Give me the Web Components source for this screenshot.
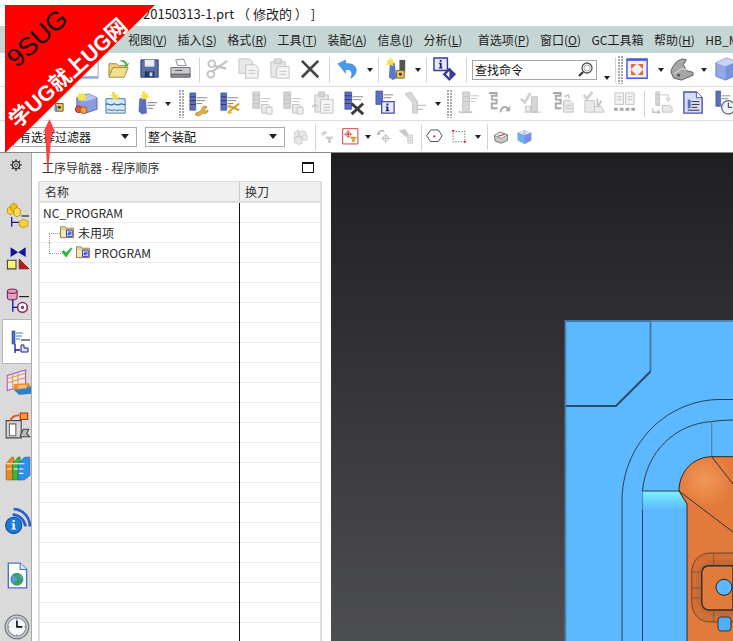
<!DOCTYPE html>
<html><head><meta charset="utf-8"><style>
html,body{margin:0;padding:0;width:733px;height:641px;overflow:hidden;background:#fff;font-family:"Noto Sans CJK SC","Noto Sans",sans-serif}
</style></head><body>
<nx-app>
<nx-titlebar>20150313-1.prt （ 修改的 ） ]</nx-titlebar>
<nx-menubar>
<nx-menu k="V">视图</nx-menu><nx-menu k="S">插入</nx-menu><nx-menu k="R">格式</nx-menu><nx-menu k="T">工具</nx-menu><nx-menu k="A">装配</nx-menu><nx-menu k="I">信息</nx-menu><nx-menu k="L">分析</nx-menu><nx-menu k="P" style="margin-left:5px">首选项</nx-menu><nx-menu k="O">窗口</nx-menu><nx-menu>GC工具箱</nx-menu><nx-menu k="H">帮助</nx-menu><nx-menu>HB_M</nx-menu>
</nx-menubar>
<nx-toolbar pad="72.5">
<nx-tool i="page"></nx-tool><nx-tool i="open"></nx-tool><nx-tool i="save"></nx-tool><nx-tool i="print"></nx-tool><nx-sep w="6"></nx-sep>
<nx-tool i="scissors"></nx-tool><nx-tool i="copy"></nx-tool><nx-tool i="paste"></nx-tool><nx-tool i="del"></nx-tool><nx-sep w="6"></nx-sep>
<nx-tool i="undo"></nx-tool><nx-dd w="12"></nx-dd><nx-sep w="6"></nx-sep><nx-tool i="millkey"></nx-tool><nx-dd w="11"></nx-dd><nx-sep w="6"></nx-sep><nx-tool i="infod"></nx-tool><nx-sep w="11.5"></nx-sep>
<nx-search>查找命令</nx-search><nx-space w="3"></nx-space><nx-dd w="14" low></nx-dd><nx-sep w="3"></nx-sep><nx-space w="1"></nx-space><nx-dots></nx-dots><nx-space w="1"></nx-space><nx-tool i="fit" w="28"></nx-tool><nx-dd w="18"></nx-dd><nx-tool i="seat" w="23"></nx-tool><nx-dd w="22"></nx-dd><nx-tool i="cube" w="22"></nx-tool>
</nx-toolbar>
<nx-toolbar pad="39">
<nx-tool i="mk"></nx-tool><nx-tool i="cherry"></nx-tool><nx-tool i="water"></nx-tool><nx-tool i="spark"></nx-tool><nx-dd w="10"></nx-dd><nx-space w="5.5"></nx-space><nx-dots></nx-dots>
<nx-tool i="wrench"></nx-tool><nx-tool i="cut"></nx-tool><nx-tool i="gcopy"></nx-tool><nx-tool i="gcopy"></nx-tool><nx-tool i="gpaste"></nx-tool><nx-tool i="xop"></nx-tool><nx-tool i="iop"></nx-tool><nx-tool i="gtool"></nx-tool><nx-dd w="12"></nx-dd><nx-space w="3.5"></nx-space><nx-dots></nx-dots>
<nx-tool i="gdrill"></nx-tool><nx-tool i="post" w="32"></nx-tool><nx-tool i="gcheck" w="32"></nx-tool><nx-tool i="gpost" w="32"></nx-tool><nx-tool i="gmach"></nx-tool><nx-tool i="book"></nx-tool><nx-sep w="6"></nx-sep>
<nx-tool i="gflow"></nx-tool><nx-tool i="list"></nx-tool><nx-tool i="clocktool"></nx-tool>
</nx-toolbar>
<nx-toolbar pad="13" last>
<nx-combo w="124" inset="5">有选择过滤器</nx-combo><nx-space w="8"></nx-space><nx-combo w="140">整个装配</nx-combo>
<nx-tool i="gasm" w="30"></nx-tool><nx-sep w="1"></nx-sep><nx-tool i="gfil" w="26"></nx-tool><nx-tool i="snap" w="17"></nx-tool><nx-dd w="17"></nx-dd><nx-tool i="grot" w="17"></nx-tool><nx-tool i="gmov" w="27"></nx-tool><nx-sep w="2"></nx-sep>
<nx-tool i="hex" w="26"></nx-tool><nx-tool i="dash" w="23"></nx-tool><nx-dd w="14"></nx-dd><nx-sep w="4"></nx-sep><nx-tool i="shade" w="25"></nx-tool><nx-tool i="box3" w="21"></nx-tool>
</nx-toolbar>
<nx-work>
<nx-rail>
<nx-railtab i="gear" h="24"></nx-railtab><nx-railtab i="asm" h="42" mt="18"></nx-railtab><nx-railtab i="con" h="40"></nx-railtab><nx-railtab i="mach" h="34" mt="8"></nx-railtab><nx-railtab i="opn" h="45" active></nx-railtab><nx-railtab i="grid" h="38" pad></nx-railtab><nx-railtab i="robot" h="48" pad></nx-railtab><nx-railtab i="books" h="36" pad></nx-railtab><nx-railtab i="rss" h="70" pad></nx-railtab><nx-railtab i="web" h="40" pad></nx-railtab><nx-railtab i="clock" h="64" pad></nx-railtab>
</nx-rail>
<nx-navigator heading="工序导航器 - 程序顺序">
<nx-tree-row>NC_PROGRAM</nx-tree-row>
<nx-tree-row depth="1" folder link="mid">未用项</nx-tree-row>
<nx-tree-row depth="2" folder check link="end">PROGRAM</nx-tree-row>
</nx-navigator>
<nx-viewport></nx-viewport>
</nx-work>
<nx-ribbon></nx-ribbon>
</nx-app>
<script>
const G='#c4c4c4',GD='#a8a8a8',GL='#e8e8e8';
const gs=`fill="${GL}" stroke="${G}"`;
const ICONS={
page:`<path d="M1 3h22v19H1z" fill="#fff" stroke="#8fa4d8"/><path d="M1 21h22" stroke="#8fa4d8" stroke-width="2"/>`,
open:`<path d="M2 20V7h8l2 2h7v3" fill="#e8d27a" stroke="#a08a3a"/><path d="M2 21l4-10h16l-4 10z" fill="#f2e08e" stroke="#a08a3a"/><path d="M13 4c4-2 7 0 8 3l2-1-2 5-4-3 2 0c-1-2-3-3-6-4z" fill="#5fae5a"/>`,
save:`<path d="M3 3h18v18H3z" fill="#5a6fa8" stroke="#2f3f70"/><path d="M7 3h10v7H7z" fill="#e8ecf5"/><path d="M7 15h10v6H7z" fill="#2a3560"/><path d="M12 16h3v4h-3z" fill="#cfd6e8"/>`,
print:`<path d="M7 3l8-1 3 7H9z" fill="#fff" stroke="#8a8a8a"/><path d="M2 11h20v7H2z" fill="#c8cbd0" stroke="#6c6c6c"/><path d="M2 18h20v3H2z" fill="#8f9297" stroke="#5c5c5c"/><path d="M6 14h8" stroke="#555"/>`,
scissors:`<path d="M22 4L7 15M21 12L8 9" stroke="${G}" stroke-width="2.4" fill="none"/><circle cx="6" cy="7" r="3.5" fill="none" stroke="${G}" stroke-width="2"/><circle cx="5" cy="18" r="3.5" fill="none" stroke="${G}" stroke-width="2"/>`,
copy:`<path d="M2 2h11l3 3v12H2z" ${gs}/><path d="M9 8h10l3 3v11H9z" fill="#f2f2f2" stroke="${G}"/><path d="M12 14h7M12 17h7" stroke="${G}"/>`,
paste:`<path d="M3 5h15v16H3z" ${gs}/><path d="M7 2h7v5H7z" fill="#dcdcdc" stroke="${G}"/><path d="M9 10h13v12H9z" fill="#f4f4f4" stroke="${G}"/><path d="M12 15h7M12 18h7" stroke="${G}"/>`,
del:`<path d="M3 4L20 21M20 4L3 21" stroke="#444" stroke-width="2.8"/>`,
undo:`<path d="M2 7l8-4v4c7-1 12 3 11 8-.5 3-3 6-6 7 2-3 2-6 0-8-1.500-1-3-1.300-5-1v4z" fill="#4a98e8" stroke="#3272c0" stroke-width=".5"/>`,
millkey:`<path d="M5 7l5-1 2 16-4 2-4-3z" fill="#5b78c8"/><path d="M15 3h6v13h-6z" fill="#555"/><path d="M12 14h8v8h-8z" fill="#e8c060" stroke="#8a6a20"/><circle cx="16" cy="18" r="1.500" fill="#333"/><path d="M6 0l1 3 3-1-2 3 3 1-3 1 1 3-3-2-2 3 0-3-3 0 2-2-2-3 3 1z" fill="#f5e04a"/>`,
infod:`<path d="M1 1h14v13H1z" fill="#e8eaf8" stroke="#3a3a9a" stroke-width="1.500"/><path d="M7 3h2v2H7zM6 6h3v5h1v1H6v-1h1V7H6z" fill="#1e1e80"/><path d="M17 11l7 7-7 7-7-7z" fill="#3a3aa0"/><path d="M17 14.500L13.500 18l3.500 3.500z" fill="#fff"/>`,
fit:`<path d="M1 2h21v20H1z" fill="#eef0fb" stroke="#4a5ad8" stroke-width="1.500"/><path d="M1 2h21v2H1z" fill="#4a5ad8"/><path d="M6 8l3 0-3 3zM17 8l-3 0 3 3zM6 18l3 0-3-3zM17 18l-3 0 3-3z" fill="#e86a3a" stroke="#e86a3a" stroke-width="1.500"/>`,
seat:`<path d="M2 16c0-3 2-6 4-9 2-3 5-4 8-5l4 1-3 5 3 6 7 2v3l-12 5-8-2z" fill="#a6a6a6" stroke="#5c5c5c"/><path d="M5 18l8-6 10 2" fill="none" stroke="#e6e6e6"/><circle cx="10" cy="19" r="1.500" fill="#555"/>`,
cube:`<path d="M2 6l11-5 10 4v14l-11 5-10-4z" fill="#93a9e6" stroke="#6a80c4"/><path d="M2 6l10 4 11-5-10-4z" fill="#c8d4f5"/><path d="M12 10v14l11-5V5z" fill="#7a92de"/>`,
mk:`<path d="M14 13h8v8h-8z" fill="#e8c060" stroke="#7a5a20"/><circle cx="18" cy="17" r="1.500" fill="#333"/><path d="M13 15h3v6h-3z" fill="#6a8ad0"/>`,
cherry:`<path d="M4 7l12-4 9 4v12l-12 4-9-4z" fill="#8a9ae0" stroke="#5a6ab0"/><path d="M4 7l9 4 12-4-9-4z" fill="#b8c4f0"/><circle cx="6" cy="19" r="3.500" fill="#e8503a" stroke="#a03020"/><circle cx="11" cy="20" r="3.500" fill="#f0a040" stroke="#a06020"/><path d="M9 0l1 3 3-1-1 3 3 1-3 1 1 3-3-1-1 3-1-3-3 1 1-3-3-1 3-1-1-3 3 1z" fill="#f5e64a"/>`,
water:`<path d="M2 8h20v15H2z" fill="#d8e8f8" stroke="#4a7aa8"/><path d="M2 14c3-2 4 2 7 0s4 2 7 0 4 1 6 0" fill="none" stroke="#2a6aa0" stroke-width="1.300"/><path d="M3 20c3-2 3 1 6 0s3 1 6 0 3 1 6 0" fill="none" stroke="#2a6aa0"/><path d="M11 1l1 3 3-1-1 3 3 1-3 1-1 2-1-2-3 1 0-3-3-1 3-1-1-3z" fill="#e8e048"/>`,
spark:`<path d="M5 8l6-1 1 16-5 1-3-3z" fill="#5b6ec0" stroke="#3c4a90" stroke-width=".5"/><path d="M13 12h10M13 15h8M13 18h6" stroke="#999" stroke-width="1.300"/><path d="M10 0l1 3 3-1-1 3 3 1-3 1-1 3-2-2-3 1 1-3-3-1 3-1-1-3z" fill="#f0e448"/>`,
wrench:`<path d="M3 2h6v18H3z" fill="#5b6ec0" stroke="#3c4a90" stroke-width=".7"/><path d="M3 6h6M3 10h6M3 14h6" stroke="#2d3870"/><path d="M10 7h11M10 10h9M10 13h6" stroke="#8a8a8a"/><path d="M9 23l5-2 3-5c2-1 3 0 4 1l-3 2 1 2 3-1c0 3-3 4-5 3l-5 3-3-1z" fill="#e8b040" stroke="#8a6a20" stroke-width=".6"/>`,
cut:`<path d="M3 2h6v18H3z" fill="#5b6ec0" stroke="#3c4a90" stroke-width=".7"/><path d="M3 6h6M3 10h6M3 14h6" stroke="#2d3870"/><path d="M10 7h11M10 10h9M10 13h6" stroke="#8a8a8a"/><path d="M22 13L12 21M22 20L13 16" stroke="#c89a2a" stroke-width="2"/><circle cx="12" cy="22" r="2" fill="#e8b040"/><circle cx="12" cy="16" r="2" fill="#e8b040"/>`,
gcopy:`<path d="M4 1h7v17H4z" fill="#d4d4d4" stroke="${G}"/><path d="M4 5h7M4 9h7M4 13h7" stroke="${G}"/><path d="M12 8h10M12 11h8" stroke="${G}"/><path d="M13 14h7l2 2v7h-9z" ${gs}/><path d="M18 17h6v7h-6z" fill="#f0f0f0" stroke="${G}"/>`,
gpaste:`<path d="M4 4h14v18H4z" ${gs}/><path d="M8 1h6v5H8z" fill="#d4d4d4" stroke="${G}"/><path d="M10 9h13v14H10z" fill="#f4f4f4" stroke="${G}"/><path d="M13 14h7M13 17h7M13 20h7" stroke="${G}"/><path d="M1 17l3-3 3 3" fill="none" stroke="${G}" stroke-width="1.500"/>`,
xop:`<path d="M3 1h7v18H3z" fill="#5b6ec0" stroke="#3c4a90" stroke-width=".7"/><path d="M3 5h7M3 9h7M3 13h7" stroke="#2d3870"/><path d="M11 6h11M11 9h9" stroke="#8a8a8a"/><path d="M10 13L22 24M22 13L10 24" stroke="#3c3c3c" stroke-width="3"/>`,
iop:`<path d="M3 0h7v14H3z" fill="#5b6ec0" stroke="#3c4a90" stroke-width=".7"/><path d="M11 4h10M11 7h8" stroke="#8a8a8a"/><path d="M9 11h13v12H9z" fill="#e8eaf8" stroke="#4a4aa0" stroke-width="1.300"/><path d="M14 13h2v2h-2zM13 16h3v4h1v1h-4v-1h1v-3h-1z" fill="#1e1e80"/>`,
gtool:`<path d="M1 3l6-2 7 10v12h-5V12z" fill="#d8d8d8" stroke="${G}"/><path d="M14 15h9M14 19h6" stroke="${G}" stroke-width="1.300"/>`,
gdrill:`<path d="M8 1h7v19H8z" fill="#d8d8d8" stroke="${G}"/><path d="M8 6h7M8 11h7" stroke="${G}"/><path d="M16 5h9M16 8h7M16 11h5" stroke="${G}"/><path d="M4 22h14" stroke="${G}" stroke-width="2"/>`,
post:`<path d="M2 2h8v3H5v4h5v4H5v5h6" fill="none" stroke="${GD}" stroke-width="2"/><path d="M14 22c0-4 3-6 6-5l2 2" fill="none" stroke="${GD}" stroke-width="2"/><path d="M24 15v6h-5z" fill="${GD}"/>`,
gcheck:`<path d="M2 8l4 4 6-10" fill="none" stroke="#d2d2d2" stroke-width="3"/><path d="M13 6h6v16h-6z" fill="#d6d6d6" stroke="${G}"/><path d="M5 22h18M7 16h5v5H7z" fill="#eee" stroke="${G}"/>`,
gpost:`<path d="M2 2h8v3H5v4h5v4H5v5h6" fill="none" stroke="${GD}" stroke-width="2"/><path d="M13 10h7l3 3v9H13z" ${gs}/><path d="M15 15h6M15 18h6" stroke="${G}"/><path d="M14 6l4-2 1 4" fill="none" stroke="${G}" stroke-width="1.500"/>`,
gmach:`<path d="M2 4l3 4 6-7" fill="none" stroke="#d2d2d2" stroke-width="3"/><path d="M3 10h10v12H3z" ${gs}/><path d="M13 16h7l3 6H13z" fill="#ececec" stroke="${G}"/><path d="M16 8v7M20 10l-3 6" stroke="${G}" stroke-width="2"/>`,
book:`<path d="M2 2h9v12H2zM13 2h9v12h-9z" fill="#f2f2f2" stroke="${G}"/><path d="M4 6h5M4 9h5M15 6h5M15 9h5" stroke="${G}"/><path d="M1 19h22" stroke="${GD}" stroke-width="3" stroke-dasharray="4 2"/>`,
gflow:`<path d="M6 1h4v14H6z" fill="#d8d8d8" stroke="${G}"/><path d="M6 4h4M6 8h4" stroke="${G}"/><path d="M11 4h8v4M19 11l-2-3h4z" fill="none" stroke="${G}"/><path d="M13 15h8l2 3v4H13z" ${gs}/><path d="M3 18v4h7M8 20l2 2-2 2" fill="none" stroke="${G}" stroke-width="1.500"/>`,
list:`<path d="M3 1h13l6 6v16H3z" fill="#d8dcf5" stroke="#4a50a8" stroke-width="1.400"/><path d="M16 1v6h6" fill="#fff" stroke="#4a50a8"/><path d="M7 9h3v9H7z" fill="#5b6ec0"/><path d="M11 11h8M11 14h8M11 17h6M7 20h12" stroke="#333"/>`,
clocktool:`<path d="M4 0h5v16H4z" fill="#5b6ec0" stroke="#3c4a90" stroke-width=".6"/><path d="M10 5h9M10 8h7" stroke="#8a8a8a"/><circle cx="17" cy="17" r="7" fill="#eef" stroke="#666" stroke-width="1.300"/><path d="M17 12v5h4" stroke="#333" fill="none"/>`,
gasm:`<path d="M5 6l6-3v9l-6 3zM5 15l6-3 5 3v7l-5 2-6-3z" ${gs}/><circle cx="17" cy="9" r="5" ${gs}/><circle cx="20" cy="14" r="4" ${gs}/>`,
gfil:`<path d="M2 8l5-3 3 2c-2 0-4 1-5 4zM8 13h11l-4 4v4h-3v-4z" fill="#d0d0d0" stroke="${G}"/>`,
snap:`<path d="M1 1h22v22H1z" fill="#fff" stroke="#c84040" stroke-width="1.400"/><circle cx="9" cy="9" r="3.500" fill="none" stroke="#b04040"/><path d="M9 3v12M3 9h12" stroke="#b04040"/><circle cx="9" cy="9" r="1.300" fill="#d82020"/><path d="M12 13h9l-3 4v3h-3v-3z" fill="#e8a820" stroke="#a07010" stroke-width=".5"/>`,
grot:`<path d="M3 9c0-4 5-7 9-4" fill="none" stroke="${GD}" stroke-width="1.600"/><circle cx="14" cy="15" r="4" fill="none" stroke="${GD}"/><path d="M14 8v14M7 15h14M2 9l2-3 2 3z" fill="${GD}" stroke="${GD}"/>`,
gmov:`<path d="M2 4l8-2 5 7-3 4z" fill="#c8c8c8" stroke="${G}"/><path d="M14 10h7v12h-7z" ${gs}/><path d="M14 14h7M14 18h7" stroke="${G}"/>`,
hex:`<path d="M6 3h12l6 9-6 9H6L0 12z" fill="#fff" stroke="#333" stroke-width="1.300" transform="translate(1 0) scale(.93)"/><circle cx="12" cy="12" r="1.600" fill="#e02020"/>`,
dash:`<path d="M3 5h17v15H3z" fill="#fff" stroke="#333" stroke-dasharray="2 2"/><circle cx="3" cy="4" r="1.600" fill="#e02020"/><circle cx="20" cy="20" r="1.600" fill="#e02020"/>`,
shade:`<path d="M2 11l8-5 11 4v8l-9 4-9-3z" fill="#c8c8c8" stroke="#555"/><path d="M2 11l10 4 9-5-11-4z" fill="#ededed" stroke="#555" stroke-width=".7"/><path d="M7 12l10-3" stroke="#e02020" stroke-width="1.400"/>`,
box3:`<path d="M2 7l10-4 10 4v11l-10 5-10-5z" fill="#6cb0f0"/><path d="M2 7l10 4 10-4-10-4z" fill="#cde4fb"/><path d="M12 11v12l10-5V7z" fill="#7a8ce8"/><path d="M12 3v8M2 7l10 4" stroke="#e06060" stroke-width=".7" fill="none"/>`,
gear:`<g fill="none" stroke="#3a3a3a"><circle cx="12" cy="12" r="4.800" stroke-width="1.800"/><circle cx="12" cy="12" r="2" stroke-width="1"/><path d="M12 4.500v2.500M12 17v2.500M4.500 12H7M17 12h2.500M6.700 6.700l1.800 1.800M15.500 15.500l1.800 1.800M17.300 6.700l-1.800 1.800M8.500 15.500l-1.800 1.800" stroke-width="2.200"/></g>`,
asm:`<path d="M5 6l3-2 3 2v4l-3 2-3-2z" fill="#f6d23c" stroke="#c08a10" stroke-width=".8"/><path d="M8 3l3-2 3 2v4l-3 2-3-2z" fill="#f2bf20" stroke="#c08a10" stroke-width=".8"/><path d="M11 7l3-2 3 2v5l-3 2-3-2z" fill="#f8dc60" stroke="#c08a10" stroke-width=".8"/><path d="M18 13h7" stroke="#111"/><path d="M9 14v9M9 19h7" stroke="#1a1a9a" stroke-width="1.200" fill="none"/><path d="M16 18l4-2 4 2v4l-4 2-4-2z" fill="#f6d23c" stroke="#c08a10" stroke-width=".8"/>`,
con:`<path d="M8 4l7 4.500L8 13zM22 4l-7 4.500 7 4.500z" fill="#14149a"/><path d="M5 16h8v8H5z" fill="#fbf36a" stroke="#444"/><path d="M16 15l9 9h-9z" fill="#c01818" stroke="#5a1010" stroke-width=".7"/>`,
mach:`<path d="M5 3a4.500 2 0 0 1 9 0v6a4.500 2 0 0 1-9 0z" fill="#e6a0c2" stroke="#7a2a5a"/><path d="M5 3a4.500 2 0 0 0 9 0" fill="none" stroke="#7a2a5a"/><path d="M16 8h9" stroke="#111"/><path d="M10 11v11M10 18h5" stroke="#14149a" stroke-width="1.200" fill="none"/><circle cx="19" cy="18" r="4.500" fill="#fff" stroke="#8a2a6a" stroke-width="1.500"/><circle cx="19" cy="18" r="1.500" fill="#8a2a6a"/>`,
opn:`<path d="M7 2h3v13H7z" fill="#4a6ed0" stroke="#24408a" stroke-width=".6"/><path d="M11 4h7M11 7h6M11 10h4" stroke="#4a6ec8"/><path d="M16 11h9" stroke="#111"/><path d="M10 15v9M10 21h5" stroke="#14149a" stroke-width="1.300" fill="none"/><path d="M16 16h3v3h4v4h-7z" fill="#dfe5f5" stroke="#14149a"/>`,
grid:`<path d="M3 6l17-5v14L3 20z" fill="#f2e2f8" stroke="#9a5ac0"/><path d="M3 9l17-5M3 13l17-5M8 5v14M13 3v14" stroke="#e0a040"/><path d="M9 14l14-1 2 3v7l-11 1-5-5z" fill="#e89030"/><path d="M9 19l5 5 11-1v-7l-11 3z" fill="#2a80d0"/><path d="M13 15h8v3h-8z" fill="#f8c070"/>`,
robot:`<path d="M2 8h14v16H2z" fill="#d8d8d8" stroke="#444"/><path d="M5 11h6v11H5z" fill="#fff" stroke="#666"/><path d="M15 22l3-6h5l-2 4 3 3H16z" fill="#bbb" stroke="#444"/><path d="M6 8c1-3 4-5 8-5" fill="none" stroke="#e85a20" stroke-width="2"/><path d="M15 1h7v6h-7z" fill="#f0a020" stroke="#c02020"/>`,
books:`<path d="M2 9l5-6h2v21H2z" fill="#e88a20" stroke="#a05010" stroke-width=".6"/><path d="M8 9l5-6h2v21H8z" fill="#3ab83a" stroke="#1a701a" stroke-width=".6"/><path d="M13 9l6-6h5v17l-5 4h-6z" fill="#2a90e8" stroke="#1a5a9a" stroke-width=".6"/><path d="M2 9h6M8 9h5M13 9h6" stroke="#fff"/><path d="M3 14h4M9 14h4M14 14h4M14 18h4" stroke="#fff"/>`,
rss:`<circle cx="9" cy="17" r="7.500" fill="#1a7ad8" stroke="#0a4a9a"/><path d="M8 12h2v2H8zM7 15h3v5h1v1H7v-1h1v-4H7z" fill="#fff"/><path d="M8 7c6 0 11 5 12 11M9 2c8 0 15 7 15 16" fill="none" stroke="#2a60c8" stroke-width="2.500"/>`,
web:`<path d="M4 1h11l6 6v17H4z" fill="#fff" stroke="#4a70c8" stroke-width="1.300"/><path d="M15 1v6h6" fill="#dde6fa" stroke="#4a70c8"/><circle cx="12" cy="16" r="6" fill="#3aa06a"/><path d="M8 13c2 0 4 1 4 3s-2 1-3 4c-2-2-2-5-1-7zM14 11c2 1 3 3 3 5-2 0-2-2-3-5z" fill="#5a9ae0"/>`,
clock:`<circle cx="12" cy="12" r="11" fill="#c4c8d0" stroke="#6a6e78"/><circle cx="12" cy="12" r="8.500" fill="#f4f6fb" stroke="#8a8e98"/><path d="M12 6v6h5" fill="none" stroke="#111" stroke-width="1.500"/><path d="M12 4v1M12 19v1M4 12h1M19 12h1" stroke="#555"/>`
};
function svg(name,size){const b=name==='gear'?24:26;return `<svg xmlns="http://www.w3.org/2000/svg" width="${size}" height="${size}" viewBox="0 0 ${b} ${b}" style="flex:none" overflow="visible">${ICONS[name]||''}</svg>`}
class Base extends HTMLElement{
  constructor(){super();this.attachShadow({mode:'open'})}
  connectedCallback(){this.render()}
  html(s){this.shadowRoot.innerHTML=s}
}
function def(n,fn){customElements.define(n,class extends Base{render(){this.html(fn(this))}})}
def('nx-app',()=>`<style>:host{display:flex;flex-direction:column;position:relative;width:733px;height:641px;overflow:hidden;background:#fff;font:12px "Noto Sans CJK SC","Noto Sans",sans-serif;color:#222}</style><slot></slot>`);
def('nx-titlebar',()=>`<style>:host{display:flex;align-items:center;height:26px;flex:none;padding-left:143px;background:#fff;font:13px "Noto Sans CJK SC","Noto Sans",sans-serif;color:#1c1c1c;white-space:pre;box-sizing:border-box}</style><slot></slot>`);
def('nx-menubar',()=>`<style>:host{display:flex;align-items:center;height:27px;flex:none;padding-left:128px;gap:10.500px;background:#c6d6d4;white-space:nowrap;overflow:hidden}</style><slot></slot>`);
def('nx-menu',e=>{const k=e.getAttribute('k');return `<style>:host{display:block;flex:none;font-size:12px;color:#1e1e1e;line-height:16px}u{text-underline-offset:1px}</style><slot></slot>${k?`(<u>${k}</u>)`:''}`});
def('nx-toolbar',e=>`<style>:host{display:flex;align-items:center;height:${e.hasAttribute('last')?'31':'33'}px;padding-left:${e.getAttribute('pad')}px;background:#fff;border-bottom:${e.hasAttribute('last')?'0':'1px solid #dcdcdc'};white-space:nowrap;overflow:hidden;flex:none}</style><slot></slot>`);
def('nx-tool',e=>`<style>:host{display:flex;flex:none;align-items:center;justify-content:center;width:${e.getAttribute('w')||31}px;height:28px}</style>${svg(e.getAttribute('i'),/^(hex|dash|gfil|snap|grot|gmov|shade|box3|gasm)$/.test(e.getAttribute('i'))?18:25)}`);
def('nx-sep',e=>`<style>:host{display:flex;flex:none;justify-content:center;width:${e.getAttribute('w')||6}px;height:26px}i{display:block;flex:none;width:1px;height:26px;background:#d4d4d4}</style><i></i>`);
def('nx-dd',e=>`<style>:host{display:flex;flex:none;justify-content:center;align-items:center;width:${e.getAttribute('w')||10}px;height:26px}i{display:block;width:0;height:0;border:3.500px solid transparent;border-top:4px solid #222;border-bottom:0;${e.hasAttribute('low')?'margin-top:16px':''}}</style><i></i>`);
def('nx-dots',()=>`<style>:host{display:block;flex:none;width:5px;height:28px;background:radial-gradient(circle at 1px 1px,#aaa 1px,transparent 1.200px) 0 0/3px 3px}</style>`);
def('nx-space',e=>`<style>:host{display:block;flex:none;width:${e.getAttribute('w')}px}</style>`);
def('nx-search',()=>`<style>:host{display:flex;flex:none;align-items:center;justify-content:space-between;box-sizing:border-box;width:125px;height:20px;border:1px solid #a6a6a6;background:#fff;padding:0 2px;font-size:12px;color:#111}svg{flex:none}</style><slot></slot><svg width="17" height="17" viewBox="0 0 17 17"><circle cx="10" cy="7" r="5" fill="#fff" stroke="#555" stroke-width="1.300"/><circle cx="10" cy="7" r="3" fill="none" stroke="#aaa"/><path d="M6 11l-4 4" stroke="#333" stroke-width="2.200"/></svg>`);
def('nx-combo',e=>`<style>:host{display:flex;flex:none;align-items:center;justify-content:space-between;box-sizing:border-box;width:${e.getAttribute('w')}px;height:20px;border:1px solid #ababab;background:#fff;padding:0 7px 0 ${e.getAttribute('inset')||2}px;font-size:12px;color:#111}i{border:4px solid transparent;border-top:5px solid #222;border-bottom:0}</style><slot></slot><i></i>`);
def('nx-work',()=>`<style>:host{display:flex;flex:1;min-height:0;border-top:1px solid #8a8a8a;overflow:hidden}</style><slot></slot>`);
def('nx-rail',()=>`<style>:host{display:flex;flex:none;flex-direction:column;width:32px;box-sizing:border-box;background:#dadada;border-right:1px solid #a9a9a9;overflow:hidden;height:100%}</style><slot></slot>`);
def('nx-railtab',e=>{const a=e.hasAttribute('active');const n=e.getAttribute('i');return `<style>:host{display:flex;flex:none;align-items:center;justify-content:center;height:${e.getAttribute('h')}px;margin-top:${e.getAttribute('mt')||0}px;box-sizing:border-box;${e.hasAttribute('pad')?'padding-left:5px;':''}${a?'background:#fff;margin:0 -1px 0 2px;border:1px solid #b5b5b5;border-right:0;border-radius:2px 0 0 2px;':''}}</style>${svg(n,n==='gear'?18:a?26:28)}`});
def('nx-navigator',e=>`<style>
:host{display:block;flex:none;width:299px;height:100%;background:#fff;overflow:hidden}
.head{display:flex;align-items:center;justify-content:space-between;height:28px;padding:0 17px 0 10px;font-size:12px;color:#333}
.max{width:10px;height:8px;border:1px solid #111;border-top-width:2px}
.table{margin:0 9px 0 6px;border:1px solid #dcdcdc;border-bottom:0;border-left-width:2px;border-right-width:2px;height:470px}
.cols{display:grid;grid-template-columns:199px 1fr;height:21px;background:#f0f0f0;border-bottom:2px solid #dcdcdc;box-sizing:border-box;line-height:19px;color:#333}
.cols div{padding-left:5px}.cols div+div{border-left:1px solid #c8c8c8}
.body{position:relative;background:repeating-linear-gradient(#fff 0 19px,#ececec 19px 20px)}
.vl{position:absolute;left:199px;top:0;bottom:0;width:1px;background:#111;z-index:1}
.fill{height:440px}
</style><div class="head"><span>${e.getAttribute('heading')}</span><span class="max"></span></div>
<div class="table"><div class="cols"><div>名称</div><div>换刀</div></div><div class="body"><div class="vl"></div><slot></slot><div class="fill"></div></div></div>`);
def('nx-tree-row',e=>{const d=+e.getAttribute('depth')||0,f=e.hasAttribute('folder'),c=e.hasAttribute('check'),l=e.getAttribute('link');
const folder=f?`<svg width="15" height="14" viewBox="0 0 16 14" style="flex:none"><path d="M.5 13V1.500h5l1 1.500h8V13z" fill="#f3e7b4" stroke="#8c7a3c"/><path d="M.5 4h14" stroke="#c8b56a"/><path d="M7 5h6v7H7z" fill="#fff" stroke="#1a2ad0"/><path d="M8.500 7h3v1.500h-3V10h3" fill="none" stroke="#1a2ad0"/></svg>`:'';
const chk=c?`<svg width="12" height="12" viewBox="0 0 14 12" style="flex:none"><path d="M1 6l2-2 3 3 6-6 1 1-7 10z" fill="#22c832" stroke="#109020" stroke-width=".5"/></svg>`:'';
const conn=l?`<i style="position:absolute;left:9px;top:${l==='mid'?10:0}px;width:${l==='mid'?11:12}px;height:${l==='mid'?10:11}px;border-left:1px dotted #999;border-bottom:${l==='mid'?'0':'1px dotted #999'};border-top:${l==='mid'?'1px dotted #999':'0'};box-sizing:border-box"></i>`:'';
return `<style>:host{display:flex;align-items:center;height:20px;box-sizing:border-box;padding-bottom:2px;position:relative;padding-left:${d==0?3:d==1?20:21}px;gap:3px;font-size:12px;color:#2a2a2a;font-family:"Noto Sans CJK SC","Noto Sans",sans-serif}</style>${conn}${chk}${folder}<slot></slot>`});
def('nx-viewport',()=>`<style>:host{display:block;flex:1;height:100%;min-width:0;background:linear-gradient(#1f1f21,#4d4e50);overflow:hidden}svg{display:block}</style>
<svg width="402" height="489" viewBox="331 153 402 489">
<defs><linearGradient id="cy" x1="0" y1="0" x2="0" y2="1"><stop offset="0" stop-color="#7df2ff"/><stop offset="1" stop-color="#5cb9ff"/></linearGradient>
<linearGradient id="or" x1="0" y1="0" x2="1" y2="0"><stop offset="0" stop-color="#d87238"/><stop offset=".2" stop-color="#e27a3c"/></linearGradient>
<radialGradient id="hi" cx="705" cy="480" r="28" gradientUnits="userSpaceOnUse"><stop offset="0" stop-color="#f09858"/><stop offset="1" stop-color="#e27a3c"/></radialGradient></defs>
<path d="M565 320.500H733V641H565z" fill="#5cb9ff"/>
<path d="M565.500 641V321H733" fill="none" stroke="#4c86b4" stroke-width="1.800"/>
<path d="M566 321H650.500V371.500" fill="none" stroke="#3f78a6" stroke-width="1.800"/>
<path d="M650.500 371.500L616 406H566" fill="none" stroke="#2e4f6a" stroke-width="2.200"/>
<path d="M622 641V498C624 440 670 399.500 720 399.500H733" fill="none" stroke="#2c3e4c"/>
<path d="M642.500 641V491C646 452 675 424 711.700 421.500Q722 420 733 420" fill="none" stroke="#2c3e4c"/>
<path d="M711.700 421.500V456.700" stroke="#4b81aa" stroke-width="1.200"/>
<path d="M642.500 491H679L687 504V510H642.500z" fill="url(#cy)"/>
<path d="M642.500 491H679" stroke="#2c3e4c"/>
<path d="M687 641V504L679 491C679 470 695 456.700 711.700 456.700H733V641z" fill="url(#or)"/>
<path d="M679 491C679 470 695 456.700 711.700 456.700H733V510L687 503z" fill="url(#hi)"/>
<path d="M687 641V504L679 491C679 470 695 456.700 711.700 456.700H733" fill="none" stroke="#2a2a2a"/>
<path d="M679 491L733 532M711.700 456.700L733 484" stroke="#333" fill="none"/>
<path d="M733 553H711C698 553 691.700 562 691.700 573V601C691.700 613 698 622 711 622H733" fill="#d16f37" stroke="#4f3a2e" stroke-width=".8"/>
<path d="M733 560H716C702 560 696 570 696 580V596C696 606 702 616 716 616H733" fill="#c46a36"/>
<path d="M733 565.700H709C704 565.700 701.700 569 701.700 574V601C701.700 606 704 610 709 610H733z" fill="#e27a3c" stroke="#2c2c2c" stroke-width="1.400"/>
<path d="M713.700 553V566M713.700 610V622M692 572H702M692 598H702M692 588H702" stroke="#6a4a38" stroke-width=".7"/>
<circle cx="724" cy="587.300" r="8" fill="#5cb9ff" stroke="#222"/>
<rect x="718" y="617" width="13" height="14" rx="3" fill="#4fb0f8" stroke="#333"/>
</svg>`);
def('nx-ribbon',()=>`<style>:host{display:block;position:absolute;left:0;top:0;width:200px;height:190px;pointer-events:none}
.t{position:absolute;left:5px;top:5px;width:150px;height:148px;background:#fe0000;clip-path:polygon(0 0,100% 0,0 100%)}
span{position:absolute;white-space:nowrap;transform:translate(-50%,-50%) rotate(-42deg);font-family:"Liberation Sans","Noto Sans CJK SC",sans-serif;line-height:1}
.a{left:37px;top:38px;font-size:26px;color:#111}
.b{left:69px;top:74px;font-size:21.500px;font-weight:bold;color:#fff}
svg{position:absolute;left:0;top:0}</style>
<div class="t"></div><span class="a">9SUG</span><span class="b">学UG就上UG网</span>
<svg width="80" height="190" viewBox="0 0 80 190"><path d="M49.500 119L56 134 52 131 47.500 175 45 131 42 135z" fill="#ff4040"/></svg>`);
</script>
</body></html>
